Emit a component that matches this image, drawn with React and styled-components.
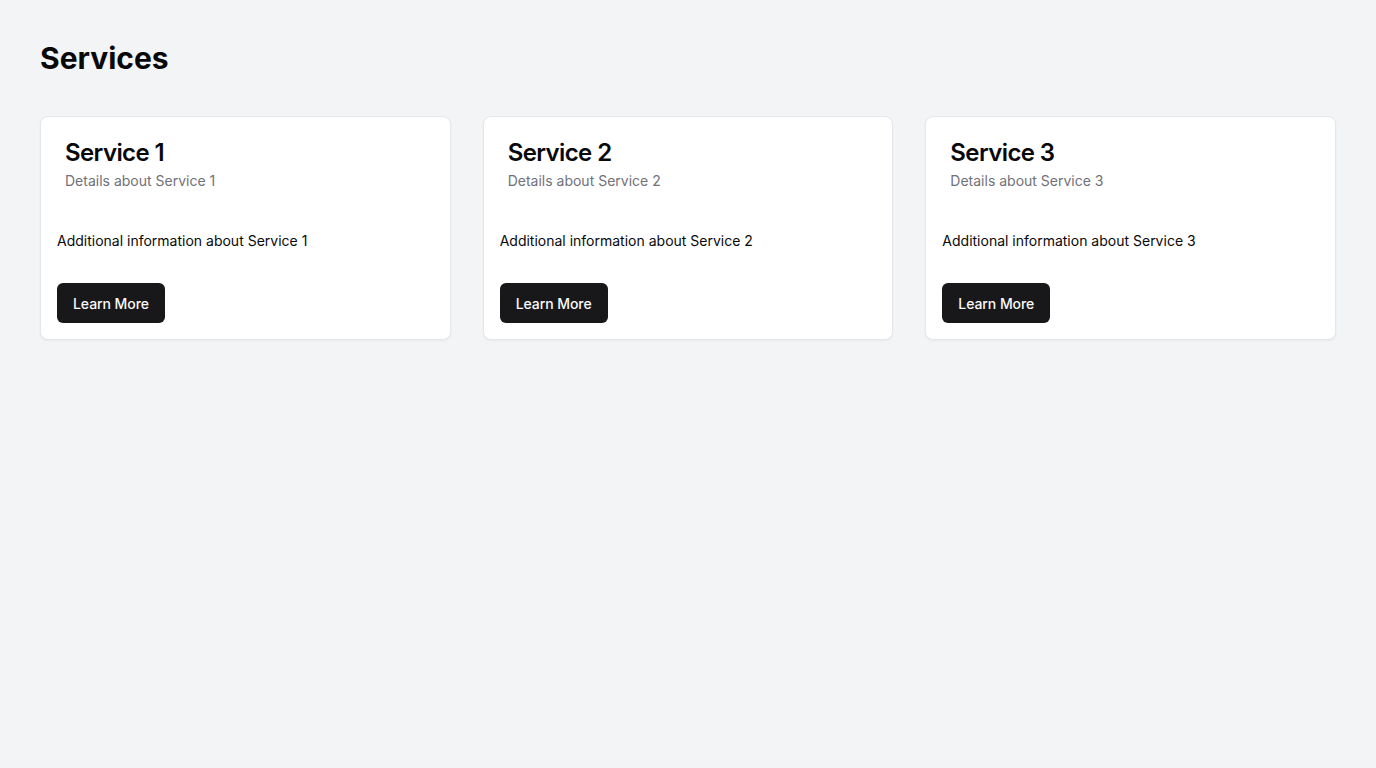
import React from 'react';
import styled, { createGlobalStyle } from 'styled-components';

const services = [1, 2, 3].map(n => ({
  title: `Service ${n}`,
  description: `Details about Service ${n}`,
  body: `Additional information about Service ${n}`,
}));

export default function App() {
  return (
    <Page>
      <GlobalStyle />
      <H1>Services</H1>
      <Grid>
        {services.map(service => (
          <Card key={service.title}>
            <CardHeader>
              <CardTitle>{service.title}</CardTitle>
              <CardDescription>{service.description}</CardDescription>
            </CardHeader>
            <CardContent>{service.body}</CardContent>
            <CardFooter>
              <Button>Learn More</Button>
            </CardFooter>
          </Card>
        ))}
      </Grid>
    </Page>
  );
}

const GlobalStyle = createGlobalStyle`
  * { box-sizing: border-box; }
  body {
    margin: 0;
    font-family: Inter, "Noto Sans", sans-serif;
    background-color: #f3f4f6;
    color: #09090b;
  }
`;

const Page = styled.div`
  min-height: 100vh;
  padding: 40px;
  background-color: #f3f4f6;
`;

const H1 = styled.h1`
  margin: 0 0 40px;
  font-size: 30px;
  line-height: 36px;
  font-weight: 700;
`;

const Grid = styled.div`
  display: grid;
  grid-template-columns: repeat(3, 1fr);
  gap: 32px;
`;

const Card = styled.div`
  background: #fff;
  border: 1px solid #e5e7eb;
  border-radius: 8px;
  box-shadow: 0 1px 2px rgba(0, 0, 0, 0.05);
`;

const CardHeader = styled.div`
  display: flex;
  flex-direction: column;
  gap: 6px;
  padding: 24px;
`;

const CardTitle = styled.h3`
  margin: 0;
  font-size: 24px;
  line-height: 24px;
  font-weight: 600;
  letter-spacing: -0.025em;
`;

const CardDescription = styled.p`
  margin: 0;
  font-size: 14px;
  line-height: 20px;
  color: #71717a;
`;

const CardContent = styled.div`
  padding: 16px;
  font-size: 14px;
  line-height: 20px;
`;

const CardFooter = styled.div`
  display: flex;
  align-items: center;
  padding: 16px;
`;

const Button = styled.button`
  height: 40px;
  padding: 0 16px;
  border: none;
  border-radius: 6px;
  background: #18181b;
  color: #fafafa;
  font-family: inherit;
  font-size: 14px;
  font-weight: 500;
  letter-spacing: -0.005em;
  cursor: pointer;
`;
